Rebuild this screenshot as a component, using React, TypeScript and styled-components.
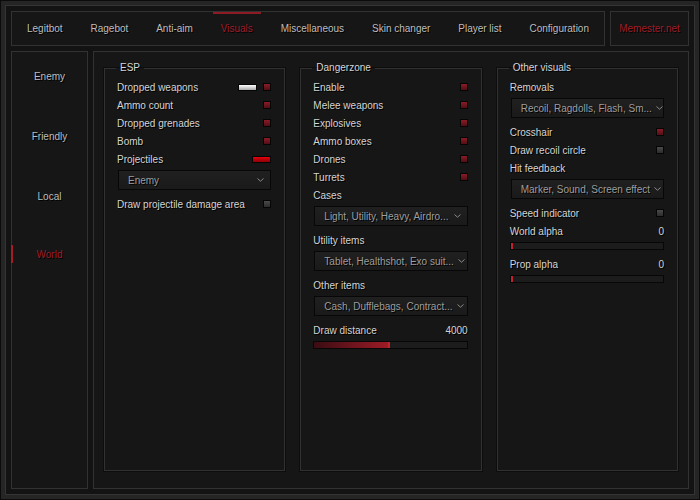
import { createGlobalStyle, styled } from "styled-components";

const Global = createGlobalStyle`
  html, body {
    margin: 0;
    padding: 0;
    background: #0b0b0b;
  }
  * {
    box-sizing: border-box;
  }
`;

const Window = styled.div`
  width: 700px;
  height: 500px;
  border: 1px solid #0b0b0b;
  background: #252525;
  padding: 4px;
  font-family: "Liberation Sans", Arial, sans-serif;
  font-size: 10px;
  color: #d4d4d4;
`;

const Inner = styled.div`
  height: 100%;
  border: 1px solid #343434;
  background: #131313;
  padding: 5px;
  display: flex;
  flex-direction: column;
  gap: 5px;
`;

const TopRow = styled.div`
  display: flex;
  gap: 5px;
  height: 35px;
`;

const Panel = styled.div`
  border: 1px solid #323232;
  background: #161616;
`;

const TabBar = styled(Panel)`
  flex: 1;
  display: flex;
  justify-content: space-between;
  align-items: stretch;
  padding: 0 7px;
`;

const Tab = styled.div<{ $active?: boolean }>`
  position: relative;
  display: flex;
  align-items: center;
  padding: 0 8px 1px;
  color: ${(p) => (p.$active ? "#a31c27" : "#bdbdbd")};
  text-shadow: 1px 1px 0 #000;

  &::before {
    content: "";
    display: ${(p) => (p.$active ? "block" : "none")};
    position: absolute;
    left: 0;
    right: 0;
    top: 0;
    height: 2px;
    background: #8e1a24;
  }
`;

const Brand = styled(Panel)`
  width: 79px;
  display: flex;
  align-items: center;
  justify-content: center;
  padding-bottom: 1px;
  color: #a31c27;
  text-shadow: 1px 1px 0 #000;
`;

const BottomRow = styled.div`
  flex: 1;
  display: flex;
  gap: 5px;
  min-height: 0;
`;

const Sidebar = styled(Panel)`
  width: 77px;
  display: flex;
  flex-direction: column;
  gap: 40px;
  padding-top: 14px;
`;

const SideItem = styled.div<{ $active?: boolean }>`
  position: relative;
  height: 20px;
  margin-top: ${(p) => (p.$active ? -2 : 0)}px;
  display: flex;
  align-items: center;
  justify-content: center;
  color: ${(p) => (p.$active ? "#a31c27" : "#bdbdbd")};
  text-shadow: 1px 1px 0 #000;

  &::before {
    content: "";
    display: ${(p) => (p.$active ? "block" : "none")};
    position: absolute;
    left: -1px;
    top: 1px;
    width: 2px;
    height: 18px;
    background: #a31c27;
  }
`;

const Main = styled(Panel)`
  flex: 1;
  display: grid;
  grid-template-columns: 1fr 1fr 1fr;
  gap: 15px;
  padding: 10px 10px 17px;
`;

const Group = styled.fieldset`
  margin: 0;
  min-width: 0;
  border: 1px solid #313131;
  box-shadow: 0 0 0 1px #0d0d0d;
  padding: 4px 13px 0 12px;
  display: flex;
  flex-direction: column;
`;

const Legend = styled.legend`
  padding: 0 4px;
  margin-left: -1px;
  line-height: 12px;
  color: #d6d6d6;
  text-shadow: 1px 1px 0 #000;
`;

const Row = styled.div<{ $gap?: number }>`
  height: 18px;
  margin-top: ${(p) => p.$gap ?? 0}px;
  display: flex;
  align-items: center;
  justify-content: space-between;
  color: #d4d4d4;
  text-shadow: 1px 1px 0 #000;
  white-space: nowrap;
`;

const Controls = styled.div`
  display: flex;
  align-items: center;
  gap: 6px;
`;

const Check = styled.div<{ $on?: boolean }>`
  width: 8px;
  height: 8px;
  border: 1px solid #050505;
  background: ${(p) =>
    p.$on
      ? "linear-gradient(#8a1c27, #520e15)"
      : "linear-gradient(#4a4a4a, #2c2c2c)"};
`;

const Swatch = styled.div<{ $color: "white" | "red" }>`
  width: 19px;
  height: 7px;
  border: 1px solid #050505;
  background: ${(p) =>
    p.$color === "white"
      ? "linear-gradient(#ffffff, #a8a8a8)"
      : "linear-gradient(#e4000c, #8e0008)"};
`;

const Select = styled.div<{ $gap?: number }>`
  height: 20px;
  margin-top: ${(p) => p.$gap ?? 2}px;
  margin-left: 1px;
  border: 1px solid #070707;
  background: linear-gradient(#202020, #1a1a1a);
  display: flex;
  align-items: center;
  justify-content: space-between;
  gap: 4px;
  padding: 0 6px 0 9px;
  color: #9d9d9d;
  text-shadow: 1px 1px 0 #000;
  white-space: nowrap;
  overflow: hidden;
`;

const Track = styled.div`
  position: relative;
  height: 8px;
  margin-top: 2px;
  border: 1px solid #070707;
  background: #1c1c1c;
`;

const Fill = styled.div`
  height: 100%;
  background: linear-gradient(to right, #3a0c12, #9c1b26);
  border-right: 2px solid #c0212d;
  min-width: 2px;
`;

const Value = styled.span`
  color: #d4d4d4;
`;

function Chevron() {
  return (
    <svg width="7" height="4" viewBox="0 0 7 4" style={{ flexShrink: 0 }}>
      <path d="M0.5 0.5 L3.5 3.2 L6.5 0.5" fill="none" stroke="#8a8a8a" strokeWidth="1" />
    </svg>
  );
}

function Dropdown(props: { text: string; gap?: number }) {
  return (
    <Select $gap={props.gap}>
      <span>{props.text}</span>
      <Chevron />
    </Select>
  );
}

function CheckRow(props: { label: string; on?: boolean; gap?: number }) {
  return (
    <Row $gap={props.gap}>
      <span>{props.label}</span>
      <Check $on={props.on} />
    </Row>
  );
}

function Slider(props: { label: string; value: number; max: number; gap?: number }) {
  const pct = (props.value / props.max) * 100;
  return (
    <>
      <Row $gap={props.gap}>
        <span>{props.label}</span>
        <Value>{props.value}</Value>
      </Row>
      <Track>
        <Fill style={{ width: `${pct}%` }} />
      </Track>
    </>
  );
}

const tabs = [
  "Legitbot",
  "Ragebot",
  "Anti-aim",
  "Visuals",
  "Miscellaneous",
  "Skin changer",
  "Player list",
  "Configuration",
];

const sides = ["Enemy", "Friendly", "Local", "World"];

export default function App() {
  return (
    <>
      <Global />
      <Window>
        <Inner>
          <TopRow>
            <TabBar>
              {tabs.map((t) => (
                <Tab key={t} $active={t === "Visuals"}>
                  {t}
                </Tab>
              ))}
            </TabBar>
            <Brand>Memester.net</Brand>
          </TopRow>
          <BottomRow>
            <Sidebar>
              {sides.map((s) => (
                <SideItem key={s} $active={s === "World"}>
                  {s}
                </SideItem>
              ))}
            </Sidebar>
            <Main>
              <Group>
                <Legend>ESP</Legend>
                <Row>
                  <span>Dropped weapons</span>
                  <Controls>
                    <Swatch $color="white" />
                    <Check $on />
                  </Controls>
                </Row>
                <CheckRow label="Ammo count" on />
                <CheckRow label="Dropped grenades" on />
                <CheckRow label="Bomb" on />
                <Row>
                  <span>Projectiles</span>
                  <Swatch $color="red" />
                </Row>
                <Dropdown text="Enemy" />
                <CheckRow label="Draw projectile damage area" gap={5} />
              </Group>

              <Group>
                <Legend>Dangerzone</Legend>
                <CheckRow label="Enable" on />
                <CheckRow label="Melee weapons" on />
                <CheckRow label="Explosives" on />
                <CheckRow label="Ammo boxes" on />
                <CheckRow label="Drones" on />
                <CheckRow label="Turrets" on />
                <Row>Cases</Row>
                <Dropdown text="Light, Utility, Heavy, Airdro..." />
                <Row $gap={5}>Utility items</Row>
                <Dropdown text="Tablet, Healthshot, Exo suit..." />
                <Row $gap={5}>Other items</Row>
                <Dropdown text="Cash, Dufflebags, Contract..." />
                <Slider label="Draw distance" value={4000} max={8000} gap={5} />
              </Group>

              <Group>
                <Legend>Other visuals</Legend>
                <Row>Removals</Row>
                <Dropdown text="Recoil, Ragdolls, Flash, Sm..." />
                <CheckRow label="Crosshair" on gap={5} />
                <CheckRow label="Draw recoil circle" />
                <Row>Hit feedback</Row>
                <Dropdown text="Marker, Sound, Screen effect" />
                <CheckRow label="Speed indicator" gap={5} />
                <Slider label="World alpha" value={0} max={100} />
                <Slider label="Prop alpha" value={0} max={100} gap={5} />
              </Group>
            </Main>
          </BottomRow>
        </Inner>
      </Window>
    </>
  );
}
